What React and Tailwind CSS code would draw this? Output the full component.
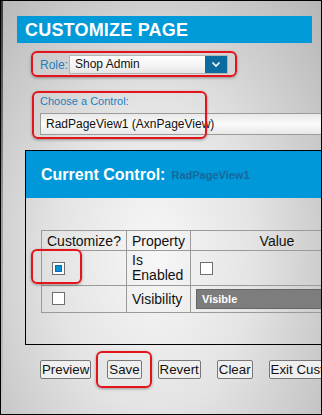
import React from 'react'

function Check({ on }) {
  return (
    <span className="inline-flex items-center justify-center w-[13px] h-[13px] border border-[#6f6f6f] bg-white align-middle">
      {on && <span className="block w-[7px] h-[7px] bg-[#0b8fd6] border border-[#0a6ea8]"></span>}
    </span>
  )
}

function Mark({ className }) {
  return <div className={`absolute border-2 border-[#e3141c] rounded-[6px] shadow-[0_1px_3px_rgba(0,0,0,0.35)] ${className}`}></div>
}

export default function App() {
  const buttons = ['Preview', 'Save', 'Revert', 'Clear', 'Exit Customization']

  return (
    <div className="relative w-[322px] h-[415px] overflow-hidden border border-black flex font-['Liberation_Sans',Arial,sans-serif] bg-[radial-gradient(ellipse_at_48%_62%,#f7f7f7_0%,#e4e4e4_42%,#b6b6b6_100%)]">
      {/* left edge */}
      <div className="w-[2px] shrink-0 bg-gradient-to-b from-[#3a3a3a] via-[#9a9a9a] to-[#c8c8c8]"></div>

      <div className="flex-1 flex flex-col min-w-0">
        {/* title */}
        <div className="mt-[15px] ml-[14px] w-[295px] h-[27px] bg-[#009ad9] flex items-center pl-[8px]">
          <span className="text-white font-bold text-[18px] leading-none tracking-[0.2px]">CUSTOMIZE PAGE</span>
        </div>

        {/* role */}
        <div className="mt-[12px] ml-[37px] flex items-center h-[19px]">
          <span className="w-[29px] text-[12px] text-[#2080bd]">Role:</span>
          <div className="w-[159px] h-[19px] flex border border-[#b5b5b5] bg-gradient-to-b from-white via-[#f6f6f6] to-[#e6e6e6]">
            <span className="flex-1 pl-[5px] text-[12px] leading-[17px] text-[#111]">Shop Admin</span>
            <span className="w-[22px] h-full bg-[#0c6b9f] flex items-center justify-center">
              <svg width="10" height="7" viewBox="0 0 10 7">
                <polyline points="1.5,1.5 5,5 8.5,1.5" fill="none" stroke="white" strokeWidth="1.6" />
              </svg>
            </span>
          </div>
        </div>

        {/* control */}
        <div className="mt-[20px] ml-[37px] text-[11px] leading-[14px] text-[#2080bd]">Choose a Control:</div>
        <div className="mt-[5px] ml-[37px] w-[300px] h-[22px] shrink-0 border border-[#9c9c9c] bg-gradient-to-b from-[#e9e9e9] via-[#fafafa] to-[#e8e8e8] flex items-center pl-[5px]">
          <span className="text-[12px] text-[#111] whitespace-nowrap">RadPageView1 (AxnPageView)</span>
        </div>

        {/* panel */}
        <div className="mt-[15px] ml-[22px] w-[380px] shrink-0 border-l border-t border-b border-black">
          <div className="h-[47px] bg-[#0098d8] flex items-center pl-[15px] gap-[6px]">
            <span className="text-white font-bold text-[16px]">Current Control:</span>
            <span className="text-[#17689c] text-[11px] font-bold pt-[2px]">RadPageView1</span>
          </div>
          <div className="pt-[32px] pl-[15px] pb-[31px]">
            <table className="border-collapse w-[323px] text-[14px] text-[#111]">
              <thead>
                <tr className="h-[20px]">
                  <th className="w-[85px] border border-[#9a9a9a] font-normal text-left pl-[5px] leading-[16px]">Customize?</th>
                  <th className="w-[64px] border border-[#9a9a9a] font-normal text-left pl-[5px] leading-[16px]">Property</th>
                  <th className="border border-[#9a9a9a] font-normal text-center leading-[16px]">Value</th>
                </tr>
              </thead>
              <tbody>
                <tr className="h-[35px]">
                  <td className="border border-[#9a9a9a] pl-[10px] align-middle"><Check on /></td>
                  <td className="border border-[#9a9a9a] pl-[5px] leading-[15px]">Is<br />Enabled</td>
                  <td className="border border-[#9a9a9a] pl-[9px] align-middle"><Check /></td>
                </tr>
                <tr className="h-[26px]">
                  <td className="border border-[#9a9a9a] pl-[10px] align-top pt-[1px]"><Check /></td>
                  <td className="border border-[#9a9a9a] pl-[5px] leading-[16px]">Visibility</td>
                  <td className="border border-[#9a9a9a] pl-[5px] pr-0 py-[3px]">
                    <div className="h-[20px] bg-[#7d7d7d] border border-[#666] flex items-center pl-[5px]">
                      <span className="text-white font-bold text-[11px]">Visible</span>
                    </div>
                  </td>
                </tr>
              </tbody>
            </table>
          </div>
        </div>

        {/* buttons */}
        <div className="mt-[15px] ml-[37px] flex gap-[16px] whitespace-nowrap">
          {buttons.map(b => (
            <button key={b} className="h-[19px] px-[1px] border border-[#777] rounded-[2px] bg-[#efefef] text-[13.3px] leading-[15px] text-[#111] shrink-0">
              {b}
            </button>
          ))}
        </div>
      </div>

      {/* annotation marks */}
      <Mark className="left-[30px] top-[50px] w-[206px] h-[26px]" />
      <Mark className="left-[31px] top-[90px] w-[175px] h-[48px]" />
      <Mark className="left-[30px] top-[248px] w-[51px] h-[35px]" />
      <Mark className="left-[95px] top-[350px] w-[56px] h-[37px]" />
    </div>
  )
}
